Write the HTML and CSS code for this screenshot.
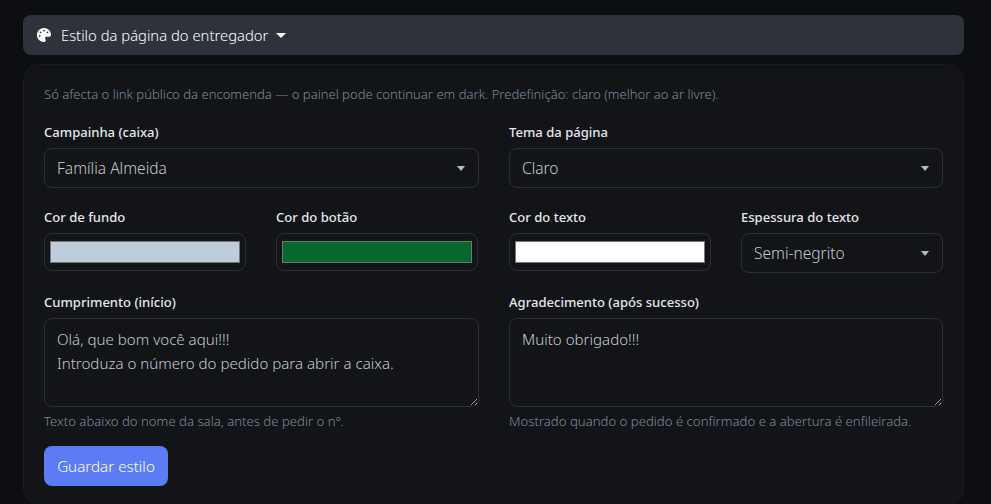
FILE: index.html
```html
<!DOCTYPE html>
<html lang="pt">
<head>
<meta charset="utf-8">
<title>Estilo da página do entregador</title>
<link rel="stylesheet" href="styles.css">
</head>
<body>
<main class="page">
  <button class="toggle" type="button">
    <svg class="palette" viewBox="0 0 512 512" aria-hidden="true"><path fill="#fff" fill-rule="evenodd" d="M512 256c0 .9 0 1.8 0 2.7-.4 36.5-33.6 61.3-70.1 61.3H344c-26.5 0-48 21.5-48 48 0 3.4.4 6.7 1 9.9 2.1 10.2 6.5 20 10.8 29.9 6.1 13.8 12.1 27.5 12.1 42 0 31.8-21.6 60.7-53.4 62-3.5.1-7 .2-10.6.2C114.6 512 0 397.4 0 256S114.6 0 256 0s256 114.6 256 256zM128 288a32 32 0 1 0-64 0 32 32 0 1 0 64 0zm0-96a32 32 0 1 0 0-64 32 32 0 1 0 0 64zM288 96a32 32 0 1 0-64 0 32 32 0 1 0 64 0zm96 96a32 32 0 1 0 0-64 32 32 0 1 0 0 64z"/></svg>
    <span>Estilo da página do entregador</span>
    <i class="caret"></i>
  </button>
  <section class="card">
    <p class="note">Só afecta o link público da encomenda — o painel pode continuar em dark. Predefinição: claro (melhor ao ar livre).</p>
    <form class="form">
      <div class="field">
        <label>Campainha (caixa)</label>
        <div class="select"><span>Família Almeida</span><i class="arrow"></i></div>
      </div>
      <div class="field">
        <label>Tema da página</label>
        <div class="select"><span>Claro</span><i class="arrow"></i></div>
      </div>
      <div class="pair">
        <div class="field">
          <label>Cor de fundo</label>
          <div class="color"><div class="swatch swatch-bg"></div></div>
        </div>
        <div class="field">
          <label>Cor do botão</label>
          <div class="color"><div class="swatch swatch-btn"></div></div>
        </div>
      </div>
      <div class="pair">
        <div class="field">
          <label>Cor do texto</label>
          <div class="color"><div class="swatch swatch-text"></div></div>
        </div>
        <div class="field">
          <label>Espessura do texto</label>
          <div class="select"><span>Semi-negrito</span><i class="arrow"></i></div>
        </div>
      </div>
      <div class="field">
        <label>Cumprimento (início)</label>
        <textarea class="area" rows="3">Olá, que bom você aqui!!!
Introduza o número do pedido para abrir a caixa.</textarea>
        <small class="help">Texto abaixo do nome da sala, antes de pedir o nº.</small>
      </div>
      <div class="field">
        <label>Agradecimento (após sucesso)</label>
        <textarea class="area" rows="3">Muito obrigado!!!</textarea>
        <small class="help">Mostrado quando o pedido é confirmado e a abertura é enfileirada.</small>
      </div>
    </form>
    <button class="save" type="button">Guardar estilo</button>
  </section>
</main>
</body>
</html>
```
FILE: styles.css
```css
* { box-sizing: border-box; }
html, body { margin: 0; height: 100%; overflow: hidden; }
body {
  background: #0c0e11;
  color: #dee2e6;
  font-family: "Noto Sans", "Open Sans", sans-serif;
  font-size: 15px;
}
.page { padding: 15px 27px 0 23px; display: flex; flex-direction: column; gap: 9px; }
.toggle {
  height: 40px;
  display: flex;
  align-items: center;
  padding: 0 14px;
  border: 0;
  border-radius: 8px;
  background: #2d323b;
  color: #fff;
  font: inherit;
  font-size: 14.8px;
  font-weight: 300;
  text-align: left;
}
.palette { width: 14px; height: 14px; margin-right: 10px; }
.caret {
  margin-left: 8px;
  border-top: 5px solid #fff;
  border-left: 5px solid transparent;
  border-right: 5px solid transparent;
}
.card {
  background: #121417;
  border: 1px solid #171a1e;
  border-radius: 16px;
  padding: 20px;
  height: 441px;
}
.note { margin: 0 0 21px; font-size: 13.07px; font-weight: 300; line-height: 18px; color: #7d8b9e; }
.form { display: grid; grid-template-columns: 435px 434px; column-gap: 30px; row-gap: 21px; }
.pair { display: grid; grid-template-columns: 202px 202px; column-gap: 30px; }
.field { display: flex; flex-direction: column; min-width: 0; }
label {
  font-size: 13.07px;
  font-weight: 500;
  line-height: 16px;
  color: #e4e7ea;
  margin-bottom: 8px;
}
.select {
  height: 40px;
  display: flex;
  align-items: center;
  justify-content: space-between;
  padding: 0 13px 0 12px;
  border: 1px solid #2b2e35;
  border-radius: 8px;
  color: #c4cad0;
  font-size: 15.5px;
  font-weight: 300;
}
.arrow {
  border-top: 5px solid #b4bbc2;
  border-left: 4px solid transparent;
  border-right: 4px solid transparent;
}
.color {
  height: 38px;
  padding: 7px 5px;
  border: 1px solid #2b2e35;
  border-radius: 8px;
}
.swatch { height: 22px; border: 1px solid #767676; }
.swatch-bg { background: #bdcddb; }
.swatch-btn { background: #05682d; }
.swatch-text { background: #fff; }
.area {
  display: block;
  width: 100%;
  height: 89px;
  padding: 8px 12px;
  background: transparent;
  border: 1px solid #2b2e35;
  border-radius: 8px;
  color: #c4cad0;
  font: inherit;
  font-size: 15.1px;
  font-weight: 300;
  line-height: 24px;
  resize: vertical;
  outline: none;
}
.help { margin-top: 6px; font-size: 13.17px; font-weight: 300; line-height: 16px; color: #7d8b9e; }
.save {
  display: block;
  margin-top: 17px;
  width: 124px;
  height: 40px;
  border: 0;
  border-radius: 8px;
  background: #5c7cf5;
  color: #fff;
  font: inherit;
  font-size: 15.2px;
  font-weight: 300;
}
```
